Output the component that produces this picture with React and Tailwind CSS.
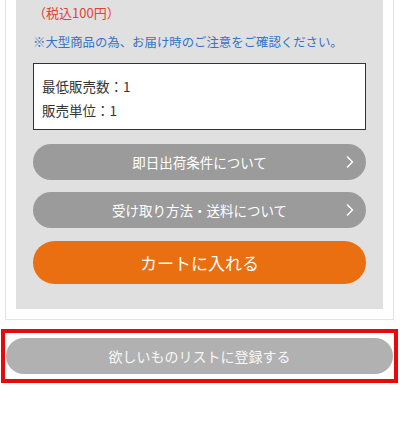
import { ChevronRight } from "lucide-react";

const font = { fontFamily: '"Noto Sans CJK JP", "Noto Sans", sans-serif' };

const InfoButton = ({ label }) => (
  <button className="relative flex h-[36px] w-full items-center justify-center rounded-full bg-[#9b9b9b] text-[13.5px] font-normal text-white">
    {label}
    <ChevronRight className="absolute right-[6px] top-1/2 h-[20px] w-[20px] -translate-y-1/2" strokeWidth={1.8} />
  </button>
);

export default function App() {
  return (
    <div className="h-[430px] w-[400px] bg-white" style={font}>
      <div className="mx-[5px] w-[389px] border-x border-b border-[#e3e3e3] px-[10px] pb-[10px]">
        <div className="bg-[#e1e0e0] px-[17px] pb-[25px]">
          <p className="pt-[4px] text-[13px] leading-[18px] text-[#e4413b]">（税込100円）</p>
          <p className="mt-[11px] whitespace-nowrap text-[12.4px] leading-[18px] text-[#3472c4]">
            ※大型商品の為、お届け時のご注意をご確認ください。
          </p>
          <div className="mt-[12px] h-[67px] border border-[#333] bg-white px-[8px] pt-[10px] text-[13.5px] leading-[24px] text-[#333]">
            <p>最低販売数：1</p>
            <p>販売単位：1</p>
          </div>
          <div className="mt-[14px] flex flex-col gap-[12px]">
            <InfoButton label="即日出荷条件について" />
            <InfoButton label="受け取り方法・送料について" />
          </div>
          <button className="mt-[13px] flex h-[43px] w-full items-center justify-center rounded-full bg-[#e96f10] text-[17px] font-normal text-white">
            カートに入れる
          </button>
        </div>
      </div>
      <div className="mx-[1px] mt-[9px] w-[397px] border-[4px] border-[#e60b0b] px-[1px] py-[5px]">
        <button className="flex h-[36px] w-full items-center justify-center rounded-full bg-[#b1b1b1] text-[14px] font-normal text-[#f7f7f7]">
          欲しいものリストに登録する
        </button>
      </div>
    </div>
  );
}
